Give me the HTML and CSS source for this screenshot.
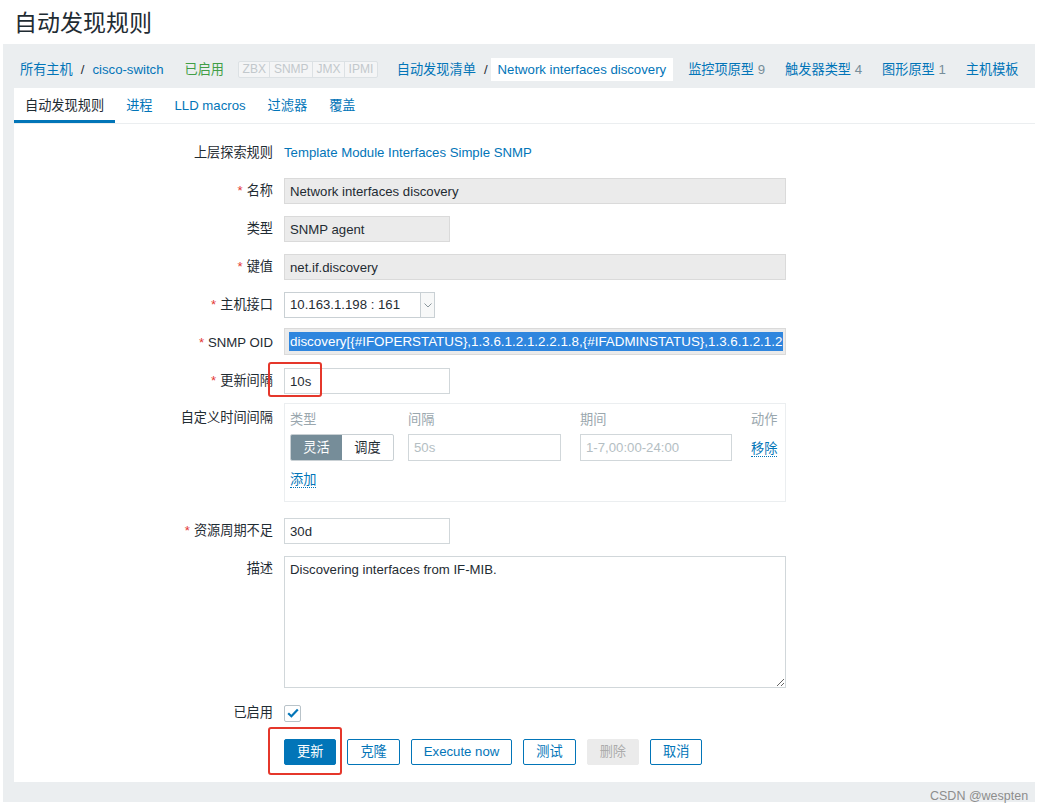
FILE: index.html
```html
<!DOCTYPE html>
<html lang="zh-CN">
<head>
<meta charset="utf-8">
<title>自动发现规则</title>
<link rel="stylesheet" href="styles.css">
</head>
<body>
<h1 class="title">自动发现规则</h1>
<div class="page">
  <nav class="crumbs">
    <span class="group"><a class="crumb">所有主机</a><span class="sep">/</span><a class="crumb">cisco-switch</a></span>
    <span class="crumb status">已启用</span>
    <span class="tags"><span>ZBX</span><span>SNMP</span><span>JMX</span><span>IPMI</span></span>
    <span class="group g2"><a class="crumb">自动发现清单</a><span class="sep">/</span><span class="crumb current">Network interfaces discovery</span></span>
    <a class="crumb">监控项原型 <span class="count">9</span></a>
    <a class="crumb">触发器类型 <span class="count">4</span></a>
    <a class="crumb">图形原型 <span class="count">1</span></a>
    <a class="crumb">主机模板</a>
  </nav>
  <div class="panel">
    <ul class="tabs">
      <li class="tab active">自动发现规则</li>
      <li class="tab">进程</li>
      <li class="tab">LLD macros</li>
      <li class="tab">过滤器</li>
      <li class="tab">覆盖</li>
    </ul>
    <form class="form">
      <label class="lbl">上层探索规则</label>
      <div class="field"><a class="plain-link">Template Module Interfaces Simple SNMP</a></div>

      <label class="lbl req">名称</label>
      <div class="field"><input class="input w-full ro" value="Network interfaces discovery" readonly></div>

      <label class="lbl">类型</label>
      <div class="field"><input class="input w-short ro" value="SNMP agent" readonly></div>

      <label class="lbl req">键值</label>
      <div class="field"><input class="input w-full ro" value="net.if.discovery" readonly></div>

      <label class="lbl req">主机接口</label>
      <div class="field">
        <div class="select">
          <span class="select-text">10.163.1.198 : 161</span>
          <span class="select-arrow"><svg width="8" height="5" viewBox="0 0 8 5"><path d="M0.5 0.5 L4 4 L7.5 0.5" fill="none" stroke="#8a969c" stroke-width="1"/></svg></span>
        </div>
      </div>

      <label class="lbl req">SNMP OID</label>
      <div class="field"><div class="input w-full ro oid"><span class="sel">discovery[{#IFOPERSTATUS},1.3.6.1.2.1.2.2.1.8,{#IFADMINSTATUS},1.3.6.1.2.1.2</span></div></div>

      <label class="lbl req">更新间隔</label>
      <div class="field annotated">
        <input class="input w-short" value="10s">
        <span class="mark mark-interval"></span>
      </div>

      <label class="lbl lbl-top lbl-iv">自定义时间间隔</label>
      <div class="field intervals">
        <div class="iv-grid">
          <span class="iv-head">类型</span>
          <span class="iv-head">间隔</span>
          <span class="iv-head">期间</span>
          <span class="iv-head">动作</span>
          <span class="segment"><span class="seg on">灵活</span><span class="seg">调度</span></span>
          <input class="input iv-input w-iv" placeholder="50s">
          <input class="input iv-input w-period" placeholder="1-7,00:00-24:00">
          <span class="iv-action"><a class="dotted">移除</a></span>
        </div>
        <div class="iv-add"><a class="dotted">添加</a></div>
      </div>

      <label class="lbl req">资源周期不足</label>
      <div class="field"><input class="input w-short" value="30d"></div>

      <label class="lbl lbl-top">描述</label>
      <div class="field"><textarea class="textarea w-full">Discovering interfaces from IF-MIB.</textarea></div>

      <label class="lbl">已启用</label>
      <div class="field check-field">
        <span class="checkbox"><svg width="12" height="10" viewBox="0 0 12 10"><path d="M1.2 5.2 L4.4 8.2 L10.8 1.6" fill="none" stroke="#0275b8" stroke-width="2.2"/></svg></span>
      </div>

      <span class="lbl"></span>
      <div class="field actions annotated">
        <button type="button" class="btn primary">更新</button>
        <button type="button" class="btn">克隆</button>
        <button type="button" class="btn">Execute now</button>
        <button type="button" class="btn">测试</button>
        <button type="button" class="btn disabled">删除</button>
        <button type="button" class="btn">取消</button>
        <span class="mark mark-btn"></span>
      </div>
    </form>
  </div>
</div>
<div class="watermark">CSDN @wespten</div>
</body>
</html>
```

FILE: styles.css
```css
* { box-sizing: border-box; }

html, body {
  margin: 0;
  padding: 0;
  background: #ffffff;
}

body {
  position: relative;
  width: 1043px;
  height: 812px;
  overflow: hidden;
  font-family: "Liberation Sans", Arial, "Noto Sans CJK SC", sans-serif;
  font-size: 13.2px;
  color: #1f2c33;
}

a { color: #0275b8; text-decoration: none; }

.title {
  margin: 0;
  height: 44px;
  padding: 7px 14px 0;
  font-family: "Noto Sans CJK SC", sans-serif;
  font-size: 23px;
  font-weight: normal;
  line-height: 28px;
  color: #1f2c33;
}

.page {
  margin-left: 3px;
  width: 1032px;
  background: #ebeef0;
  padding-bottom: 20px;
}

/* breadcrumbs */
.crumbs {
  display: flex;
  align-items: center;
  gap: 10px;
  height: 44px;
  padding: 7px 0 0 12px;
  white-space: nowrap;
}
.group { display: flex; align-items: center; }
.g2 { margin-left: 4px; }
.crumb {
  padding: 0 5px;
  line-height: 23px;
  color: #0275b8;
}
.sep { margin: 0 3px; color: #1f2c33; }
.status { color: #429e47; margin-left: 1px; }
.current { background: #ffffff; padding: 0 7px; }
.count { color: #768d99; }

.tags {
  display: flex;
  margin-left: -1px;
  border: 1px solid #dce1e4;
  border-radius: 2px;
  background: #f4f5f6;
  font-size: 12px;
  line-height: 15px;
  color: #c2c8cc;
}
.tags span { padding: 0 3.5px; }
.tags span + span { border-left: 1px solid #dce1e4; }

/* panel + tabs */
.panel {
  margin-left: 11px;
  background: #ffffff;
}

.tabs {
  display: flex;
  margin: 0;
  padding: 0;
  list-style: none;
  border-bottom: 1px solid #ebeef0;
}
.tab {
  padding: 3px 11px 0;
  line-height: 29px;
  border-bottom: 3px solid transparent;
  color: #0275b8;
}
.tab.active {
  color: #1f2c33;
  border-bottom-color: #0275b8;
}

/* form grid */
.form {
  display: grid;
  grid-template-columns: 259px 502px;
  column-gap: 11px;
  row-gap: 12px;
  align-items: start;
  padding: 16px 0 17px;
}

.lbl {
  display: block;
  text-align: right;
  line-height: 26px;
  white-space: nowrap;
}
.lbl.req::before {
  content: "*";
  color: #e33734;
  margin-right: 4px;
}
.lbl-iv { margin-top: -1px; }

.field { min-height: 26px; }
.plain-link { display: block; line-height: 26px; }

.input {
  display: block;
  height: 26px;
  padding: 0 5px;
  border: 1px solid #d1d7da;
  background: #ffffff;
  font: inherit;
  color: #1f2c33;
  outline: none;
}
.input::placeholder { color: #b4bec3; }
.input.ro {
  background: #ebebeb;
  border-color: #dadada;
}
.w-full { width: 502px; }
.w-short { width: 166px; }

.select {
  display: flex;
  width: 151px;
  height: 26px;
  border: 1px solid #c9d0d4;
  background: #ffffff;
}
.select-text {
  flex: 1;
  padding: 0 5px;
  line-height: 24px;
}
.select-arrow {
  display: flex;
  align-items: center;
  justify-content: center;
  width: 14px;
  border-left: 1px solid #c9d0d4;
  background: #f7f8f8;
}

.oid {
  height: 27px;
  margin-top: -2px;
  padding: 0 4px;
  border-color: #8ea6b6;
  font-size: 13.4px;
  line-height: 25px;
  white-space: nowrap;
  overflow: hidden;
}
.sel {
  background: #2f86de;
  color: #ffffff;
  padding: 2px 1px;
}

.annotated { position: relative; }
.mark {
  position: absolute;
  border: 2px solid #e5372b;
  border-radius: 3px;
  pointer-events: none;
}
.mark-interval {
  left: -16px;
  top: -6px;
  width: 54px;
  height: 35px;
}
.mark-btn {
  left: -16px;
  top: -12px;
  width: 74px;
  height: 48px;
}

/* custom intervals */
.intervals {
  width: 502px;
  margin-top: -3px;
  margin-bottom: 4px;
  padding: 8px 5px 12px;
  border: 1px solid #ebeef0;
}
.iv-grid {
  display: grid;
  grid-template-columns: 118px 172px 171px auto;
  row-gap: 6px;
  align-items: center;
}
.iv-head {
  line-height: 16px;
  color: #9aa7ae;
}
.segment {
  display: flex;
  width: 104px;
  height: 27px;
  border: 1px solid #c9d0d4;
  border-radius: 2px;
  overflow: hidden;
}
.seg {
  flex: 1;
  text-align: center;
  line-height: 25px;
  color: #1f2c33;
}
.seg.on {
  background: #768d99;
  color: #ffffff;
}
.iv-input { height: 27px; }
.w-iv { width: 153px; }
.w-period { width: 152px; }
.dotted {
  border-bottom: 1px dotted #0275b8;
}
.iv-add {
  margin-top: 10px;
  line-height: 18px;
}

.textarea {
  display: block;
  height: 132px;
  padding: 4px 5px;
  border: 1px solid #d1d7da;
  font: inherit;
  line-height: 18px;
  color: #1f2c33;
  resize: vertical;
  outline: none;
}

.check-field {
  display: flex;
  align-items: center;
  height: 26px;
}
.checkbox {
  display: flex;
  align-items: center;
  justify-content: center;
  width: 17px;
  height: 17px;
  border: 1px solid #b9c3c9;
  border-radius: 2px;
  background: #ffffff;
}

.actions {
  display: flex;
  gap: 11px;
  margin-top: 1px;
}
.btn {
  height: 26px;
  padding: 0 12px;
  border: 1px solid #0275b8;
  border-radius: 2px;
  background: #ffffff;
  color: #0275b8;
  font: inherit;
  line-height: 24px;
}
.btn.primary {
  background: #0275b8;
  color: #ffffff;
}
.btn.disabled {
  background: #ebebeb;
  border-color: #ebebeb;
  color: #acacac;
}

.watermark {
  position: absolute;
  left: 930px;
  top: 788px;
  font-size: 12.5px;
  line-height: 16px;
  color: #8d8d8d;
}
```
